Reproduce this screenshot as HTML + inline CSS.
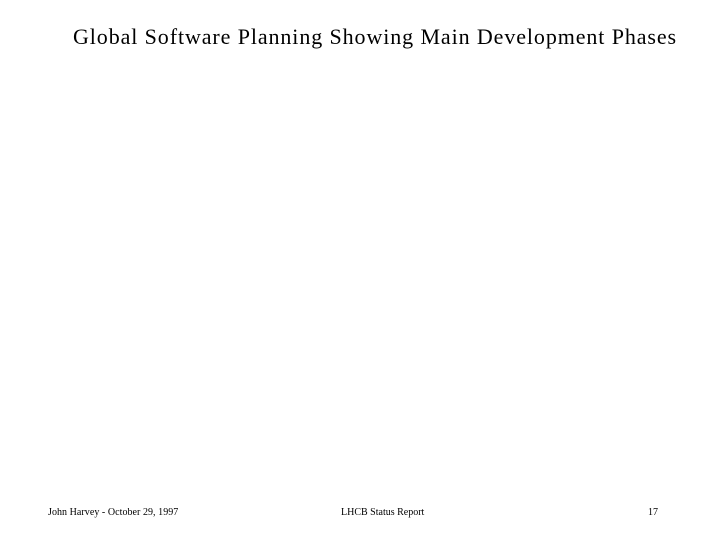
<!DOCTYPE html>
<html><head><style>
body{margin:0;width:720px;height:540px;background:#fff;position:relative;font-family:"Liberation Serif",serif;color:#000}
.t{position:absolute;left:73px;top:24px;font-size:22px;white-space:nowrap;letter-spacing:0.9px}
.f{position:absolute;top:507px;font-size:10px;white-space:nowrap}
</style></head><body>
<div class="t">Global Software Planning Showing Main Development Phases</div>
<div class="f" style="left:48px;letter-spacing:0.05px">John Harvey - October 29, 1997</div>
<div class="f" style="left:341px">LHCB Status Report</div>
<div class="f" style="left:648px">17</div>
</body></html>
